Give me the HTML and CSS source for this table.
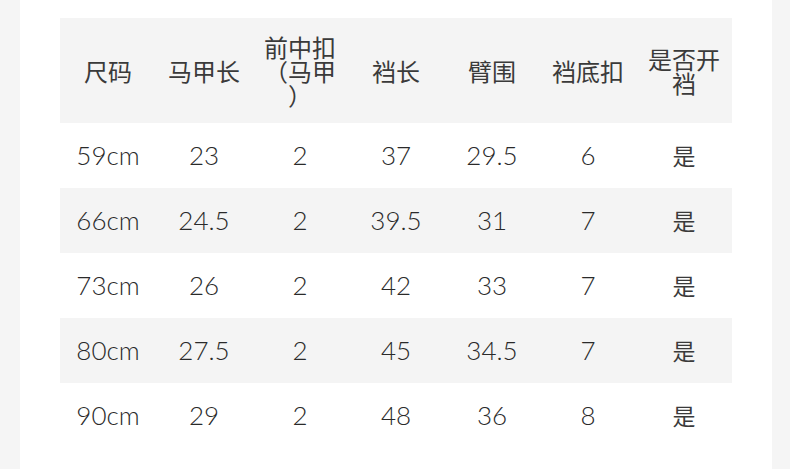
FILE: index.html
```html
<!DOCTYPE html>
<html lang="zh-CN">
<head>
<meta charset="utf-8">
<title>尺码表</title>
<link rel="stylesheet" href="styles.css">
</head>
<body>
<div class="page">
  <div class="side side-left"></div>
  <main class="main">
    <div class="table">
      <div class="row head">
        <div class="cell">尺码</div>
        <div class="cell">马甲长</div>
        <div class="cell">前中扣<br>（马甲<br>）</div>
        <div class="cell">裆长</div>
        <div class="cell">臂围</div>
        <div class="cell">裆底扣</div>
        <div class="cell">是否开<br>裆</div>
      </div>
      <div class="row">
        <div class="cell num">59cm</div><div class="cell num">23</div><div class="cell num">2</div><div class="cell num">37</div><div class="cell num">29.5</div><div class="cell num">6</div><div class="cell cjk">是</div>
      </div>
      <div class="row alt">
        <div class="cell num">66cm</div><div class="cell num">24.5</div><div class="cell num">2</div><div class="cell num">39.5</div><div class="cell num">31</div><div class="cell num">7</div><div class="cell cjk">是</div>
      </div>
      <div class="row">
        <div class="cell num">73cm</div><div class="cell num">26</div><div class="cell num">2</div><div class="cell num">42</div><div class="cell num">33</div><div class="cell num">7</div><div class="cell cjk">是</div>
      </div>
      <div class="row alt">
        <div class="cell num">80cm</div><div class="cell num">27.5</div><div class="cell num">2</div><div class="cell num">45</div><div class="cell num">34.5</div><div class="cell num">7</div><div class="cell cjk">是</div>
      </div>
      <div class="row">
        <div class="cell num">90cm</div><div class="cell num">29</div><div class="cell num">2</div><div class="cell num">48</div><div class="cell num">36</div><div class="cell num">8</div><div class="cell cjk">是</div>
      </div>
    </div>
  </main>
  <div class="side side-right"></div>
</div>
</body>
</html>
```

FILE: styles.css
```css
html, body {
  margin: 0;
  padding: 0;
  background: #ffffff;
}

.page {
  display: flex;
  width: 790px;
  height: 469px;
  overflow: hidden;
}

.side {
  background: #f5f5f5;
}

.side-left {
  width: 20px;
}

.side-right {
  width: 18px;
}

.main {
  flex: 1;
  padding: 18px 0 0 40px;
}

.table {
  width: 672px;
  color: #3a3a3a;
  font-family: "Noto Sans CJK SC", "Noto Sans", sans-serif;
}

.row {
  display: grid;
  grid-template-columns: repeat(7, 96px);
  height: 65px;
}

.row.head {
  height: 105px;
  background: #f4f4f4;
}

.row.alt {
  background: #f4f4f4;
}

.cell {
  display: flex;
  align-items: center;
  justify-content: center;
  text-align: center;
}

.head .cell {
  font-size: 24px;
  line-height: 24px;
  font-weight: 400;
}

.num {
  font-family: "Lato", "Noto Sans", sans-serif;
  font-size: 26px;
  font-weight: 300;
  color: #2a2a2a;
  padding-bottom: 2px;
}

.cjk {
  font-size: 23px;
  padding-bottom: 2px;
}
```
